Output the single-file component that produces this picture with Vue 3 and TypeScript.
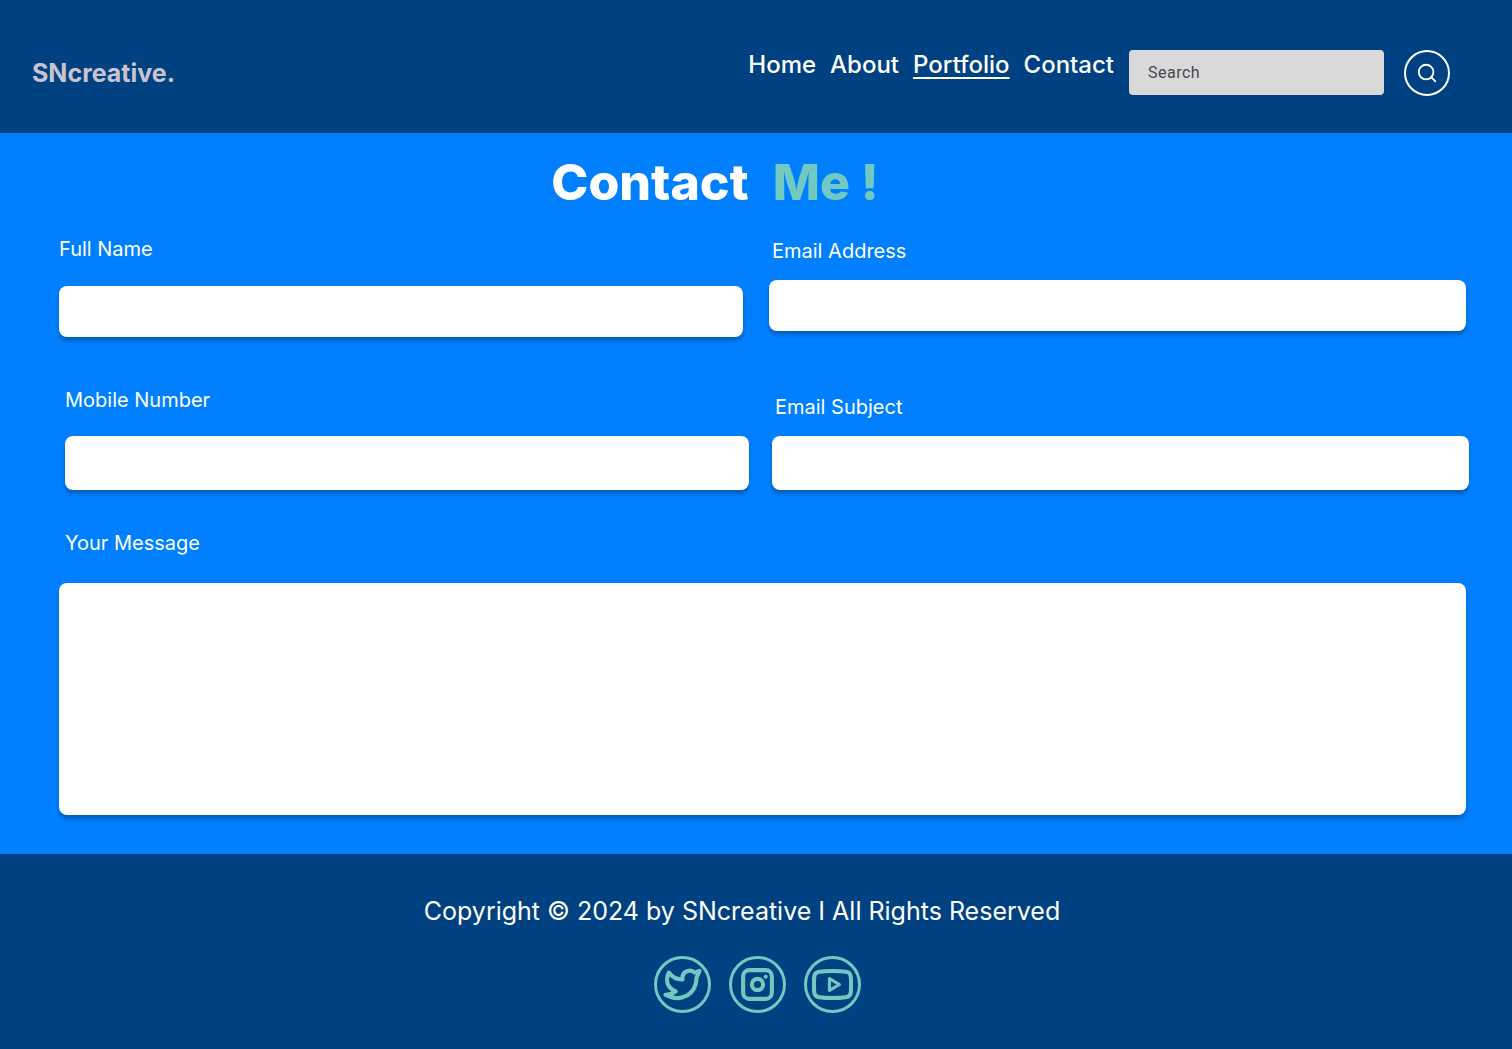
<script setup lang="ts">
import { ref } from 'vue'

interface NavLink {
  label: string
  current?: boolean
}

interface Field {
  id: string
  label: string
  type: string
}

const navLinks: NavLink[] = [
  { label: 'Home' },
  { label: 'About' },
  { label: 'Portfolio', current: true },
  { label: 'Contact' },
]

const rows: { name: string; fields: Field[] }[] = [
  {
    name: 'identity',
    fields: [
      { id: 'full-name', label: 'Full Name', type: 'text' },
      { id: 'email-address', label: 'Email Address', type: 'email' },
    ],
  },
  {
    name: 'details',
    fields: [
      { id: 'mobile-number', label: 'Mobile Number', type: 'tel' },
      { id: 'email-subject', label: 'Email Subject', type: 'text' },
    ],
  },
]

const query = ref('')
const values = ref<Record<string, string>>({})
const message = ref('')
</script>

<template>
  <div class="page">
    <header class="header">
      <a class="logo" href="#">SNcreative.</a>
      <nav class="nav">
        <a
          v-for="link in navLinks"
          :key="link.label"
          href="#"
          :class="{ current: link.current }"
          >{{ link.label }}</a
        >
      </nav>
      <form class="search" role="search" @submit.prevent>
        <input v-model="query" type="search" placeholder="Search" aria-label="Search" />
        <button type="submit" aria-label="Submit search">
          <svg viewBox="0 0 24 24" width="22" height="22" aria-hidden="true">
            <circle cx="11" cy="11" r="8" />
            <path d="M16.8 16.8 L21 21" />
          </svg>
        </button>
      </form>
    </header>

    <main class="main">
      <h1 class="title">Contact <span>Me !</span></h1>
      <form class="form" @submit.prevent>
        <div v-for="row in rows" :key="row.name" class="row" :class="row.name">
          <div v-for="field in row.fields" :key="field.id" class="field">
            <label :for="field.id">{{ field.label }}</label>
            <input :id="field.id" v-model="values[field.id]" :type="field.type" />
          </div>
        </div>
        <div class="message">
          <label for="message">Your Message</label>
          <textarea id="message" v-model="message"></textarea>
        </div>
      </form>
    </main>

    <footer class="footer">
      <p>Copyright © 2024 by SNcreative I All Rights Reserved</p>
      <div class="social">
        <a href="#" aria-label="Twitter">
          <svg viewBox="0 0 24 24" width="41" height="41" aria-hidden="true">
            <path
              class="bird"
              d="M22 4.01c-1 .49-1.98.689-3 .99-1.121-1.265-2.783-1.335-4.38-.737S11.977 6.323 12 8v1c-3.245.083-6.135-1.395-8-4 0 0-4.182 7.433 4 11-1.872 1.247-3.739 2.088-6 2 3.308 1.803 6.913 2.423 10.034 1.517 3.58-1.04 6.522-3.723 7.651-7.742a13.84 13.84 0 0 0 .497-3.753c0-.249 1.51-2.772 1.818-4.013z"
            />
          </svg>
        </a>
        <a href="#" aria-label="Instagram">
          <svg viewBox="0 0 40 40" width="41" height="41" aria-hidden="true">
            <rect class="heavy" x="6" y="6" width="28" height="28" rx="6" />
            <circle class="heavy" cx="20" cy="20" r="5.5" />
            <circle class="dot" cx="28" cy="12.5" r="2" />
          </svg>
        </a>
        <a href="#" aria-label="YouTube">
          <svg viewBox="0 0 40 40" width="41" height="41" aria-hidden="true">
            <path
              class="heavy"
              d="M7 7.6 Q20 6 33 7.6 Q37.600 8.200 37.900 13 Q38.400 20 37.900 27 Q37.600 31.800 33 32.400 Q20 34 7 32.400 Q2.400 31.800 2.100 27 Q1.600 20 2.100 13 Q2.400 8.200 7 7.600 Z"
            />
            <path class="play" d="M17 14.200 L26.800 20 L17 25.800 Z" />
          </svg>
        </a>
      </div>
    </footer>
  </div>
</template>

<style>
body {
  margin: 0;
  background: #004182;
}
</style>

<style scoped>
.page {
  font-family: Inter, sans-serif;
  color: #fff;
}

a {
  color: inherit;
  text-decoration: none;
}

.header {
  display: flex;
  align-items: center;
  padding: 50px 62px 37px 32px;
  background: #004182;
}

.logo {
  margin-right: auto;
  font-size: 25px;
  line-height: 32px;
  font-weight: 700;
  color: #cac4d0;
}

.nav {
  display: flex;
  align-self: flex-start;
  gap: 14px;
  margin-right: 15px;
  font-size: 24px;
  line-height: 30px;
  font-weight: 500;
}

.current {
  text-decoration: underline;
  text-decoration-thickness: 2px;
  text-underline-offset: 4px;
}

.search {
  display: flex;
  gap: 20px;
}

.search input {
  box-sizing: border-box;
  width: 255px;
  height: 45px;
  padding: 0 19px;
  border: 0;
  border-radius: 4px;
  background: #d9d9d9;
  font-family: Roboto, sans-serif;
  font-size: 16px;
  letter-spacing: 0.5px;
  color: #49454f;
}

.search input::placeholder {
  color: #49454f;
  opacity: 1;
}

.search button {
  display: flex;
  align-items: center;
  justify-content: center;
  width: 46px;
  height: 46px;
  padding: 0;
  border: 2px solid #fff;
  border-radius: 50%;
  background: none;
}

svg {
  fill: none;
  stroke: currentColor;
  stroke-width: 2;
  stroke-linecap: round;
  stroke-linejoin: round;
}

.search svg {
  color: #fff;
}

.main {
  padding: 20px 0 39px;
  background: #0080ff;
}

.title {
  display: flex;
  justify-content: center;
  gap: 24px;
  margin: 0;
  padding-right: 82px;
  font-size: 50px;
  line-height: 58px;
  font-weight: 800;
}

.title span {
  color: #72c9c1;
}

.form {
  display: flex;
  flex-direction: column;
}

.form label {
  font-size: 20px;
  line-height: 24px;
}

.form input,
.form textarea {
  box-sizing: border-box;
  width: 100%;
  border: 0;
  border-radius: 8px;
  background: #fff;
  box-shadow: 0 4px 4px rgba(0, 0, 0, 0.25);
  padding: 8px 16px;
  font: inherit;
  font-size: 20px;
}

.row {
  display: grid;
  grid-template-columns: 684fr 697fr;
}

.field {
  display: flex;
  flex-direction: column;
}

.field:last-child label {
  padding-left: 3px;
}

.identity {
  gap: 26px;
  padding: 26px 46px 0 59px;
}

.identity .field {
  gap: 25px;
}

.identity .field:last-child {
  gap: 17px;
  padding-top: 2px;
}

.identity input {
  height: 51px;
}

.details {
  gap: 23px;
  align-items: end;
  padding: 51px 43px 0 65px;
}

.details .field {
  gap: 24px;
}

.details .field:last-child {
  gap: 17px;
}

.details input {
  height: 54px;
}

.message {
  display: flex;
  flex-direction: column;
  gap: 28px;
  padding: 41px 46px 0 59px;
}

.message label {
  padding-left: 6px;
}

.message textarea {
  height: 232px;
  resize: none;
}

.footer {
  padding: 39px 0 36px;
  background: #004182;
}

.footer p {
  margin: 0 0 27px;
  padding-right: 28px;
  font-size: 25px;
  line-height: 36px;
  text-align: center;
}

.social {
  display: flex;
  justify-content: center;
  gap: 18px;
  padding-left: 3px;
  color: #72c9c1;
}

.social a {
  display: flex;
  align-items: center;
  justify-content: center;
  box-sizing: border-box;
  width: 57px;
  height: 57px;
  border: 3px solid currentColor;
  border-radius: 50%;
}

.bird {
  stroke-width: 2.4;
}

.heavy {
  stroke-width: 4;
}

.play {
  stroke-width: 3;
}

.dot {
  fill: currentColor;
  stroke: none;
}
</style>
